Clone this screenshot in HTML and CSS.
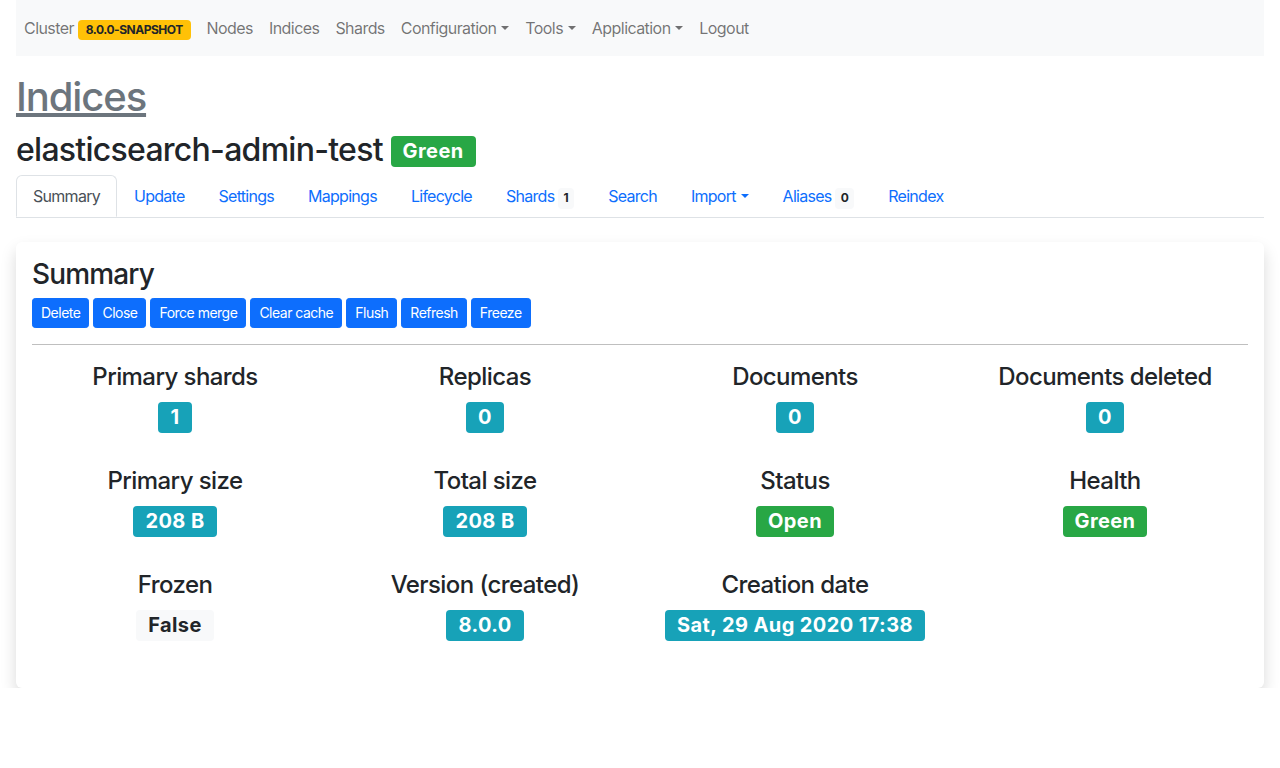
FILE: index.html
```html
<!DOCTYPE html>
<html lang="en">
<head>
<meta charset="utf-8">
<title>Indices - elasticsearch-admin-test</title>
<link rel="stylesheet" href="styles.css">
</head>
<body>
<div class="container">
  <nav class="navbar">
    <ul class="navbar-nav">
      <li><a class="nav-link" href="#">Cluster <span class="badge badge-warning">8.0.0-SNAPSHOT</span></a></li>
      <li><a class="nav-link" href="#">Nodes</a></li>
      <li><a class="nav-link" href="#">Indices</a></li>
      <li><a class="nav-link" href="#">Shards</a></li>
      <li><a class="nav-link dropdown-toggle" href="#">Configuration</a></li>
      <li><a class="nav-link dropdown-toggle" href="#">Tools</a></li>
      <li><a class="nav-link dropdown-toggle" href="#">Application</a></li>
      <li><a class="nav-link" href="#">Logout</a></li>
    </ul>
  </nav>

  <h1 class="page-title"><a href="#">Indices</a></h1>
  <h2 class="index-title">elasticsearch-admin-test <span class="badge badge-lg badge-success">Green</span></h2>

  <ul class="nav-tabs">
    <li><a class="tab-link active" href="#">Summary</a></li>
    <li><a class="tab-link" href="#">Update</a></li>
    <li><a class="tab-link" href="#">Settings</a></li>
    <li><a class="tab-link" href="#">Mappings</a></li>
    <li><a class="tab-link" href="#">Lifecycle</a></li>
    <li><a class="tab-link" href="#">Shards <span class="badge badge-light badge-tab">1</span></a></li>
    <li><a class="tab-link" href="#">Search</a></li>
    <li><a class="tab-link dropdown-toggle" href="#">Import</a></li>
    <li><a class="tab-link" href="#">Aliases <span class="badge badge-light badge-tab">0</span></a></li>
    <li><a class="tab-link" href="#">Reindex</a></li>
  </ul>

  <div class="card">
    <div class="card-body">
      <h3 class="card-title">Summary</h3>
      <div class="actions">
        <button class="btn">Delete</button>
        <button class="btn">Close</button>
        <button class="btn">Force merge</button>
        <button class="btn">Clear cache</button>
        <button class="btn">Flush</button>
        <button class="btn">Refresh</button>
        <button class="btn">Freeze</button>
      </div>
      <hr class="divider">
      <div class="stats">
        <div class="stat"><h4 class="stat-label">Primary shards</h4><span class="badge badge-lg badge-info">1</span></div>
        <div class="stat"><h4 class="stat-label">Replicas</h4><span class="badge badge-lg badge-info">0</span></div>
        <div class="stat"><h4 class="stat-label">Documents</h4><span class="badge badge-lg badge-info">0</span></div>
        <div class="stat"><h4 class="stat-label">Documents deleted</h4><span class="badge badge-lg badge-info">0</span></div>
        <div class="stat"><h4 class="stat-label">Primary size</h4><span class="badge badge-lg badge-info">208 B</span></div>
        <div class="stat"><h4 class="stat-label">Total size</h4><span class="badge badge-lg badge-info">208 B</span></div>
        <div class="stat"><h4 class="stat-label">Status</h4><span class="badge badge-lg badge-success">Open</span></div>
        <div class="stat"><h4 class="stat-label">Health</h4><span class="badge badge-lg badge-success">Green</span></div>
        <div class="stat"><h4 class="stat-label">Frozen</h4><span class="badge badge-lg badge-light">False</span></div>
        <div class="stat"><h4 class="stat-label">Version (created)</h4><span class="badge badge-lg badge-info">8.0.0</span></div>
        <div class="stat"><h4 class="stat-label">Creation date</h4><span class="badge badge-lg badge-info">Sat, 29 Aug 2020 17:38</span></div>
      </div>
    </div>
  </div>
</div>
</body>
</html>
```

FILE: styles.css
```css
* { box-sizing: border-box; }

body {
  margin: 0;
  font-family: Inter, "Noto Sans", sans-serif;
  font-size: 16px;
  line-height: 1.5;
  color: #212529;
  background: #fff;
}

a { text-decoration: none; }

.container {
  padding: 0 16px;
}

/* Navbar */
.navbar {
  background: #f8f9fa;
  height: 56px;
  display: flex;
  align-items: center;
}

.navbar-nav {
  list-style: none;
  margin: 0;
  padding: 0;
  display: flex;
}

.nav-link {
  display: block;
  padding: 8px 8px;
  color: rgba(0, 0, 0, 0.55);
  letter-spacing: -0.035em;
}

.dropdown-toggle::after {
  content: "";
  display: inline-block;
  margin-left: 0.3em;
  vertical-align: 0.255em;
  border-top: 0.3em solid;
  border-right: 0.3em solid transparent;
  border-left: 0.3em solid transparent;
  border-bottom: 0;
}

/* Badges */
.badge {
  display: inline-block;
  padding: 0.35em 0.65em;
  font-size: 12px;
  font-weight: 700;
  line-height: 1;
  letter-spacing: -0.04em;
  text-align: center;
  white-space: nowrap;
  vertical-align: baseline;
  border-radius: 0.25rem;
  color: #fff;
}

.badge-tab {
  padding: 0.35em 0.45em;
  letter-spacing: 0;
}

.badge-lg {
  font-size: 20px;
  padding: 5.5px 12px;
  letter-spacing: 0.02em;
}

.badge-warning { background: #ffc107; color: #212529; }
.badge-success { background: #28a745; }
.badge-info { background: #17a2b8; }
.badge-light { background: #f8f9fa; color: #212529; }

/* Headings */
.page-title {
  margin: 17px 0 10px;
  font-size: 40px;
  font-weight: 500;
  line-height: 1.2;
  letter-spacing: -0.028em;
}

.page-title a {
  color: #6c757d;
  text-decoration: underline;
}

.index-title {
  margin: 0 0 6px;
  font-size: 32px;
  font-weight: 500;
  line-height: 1.2;
  letter-spacing: -0.023em;
}

.index-title .badge {
  vertical-align: 3px;
}

/* Tabs */
.nav-tabs {
  list-style: none;
  margin: 0;
  padding: 0;
  display: flex;
  border-bottom: 1px solid #dee2e6;
}

.nav-tabs li { margin-bottom: -1px; }

.tab-link {
  display: block;
  padding: 8px 16px;
  color: #0d6efd;
  letter-spacing: -0.045em;
  border: 1px solid transparent;
  border-top-left-radius: 0.375rem;
  border-top-right-radius: 0.375rem;
}

.tab-link.active {
  color: #495057;
  background: #fff;
  border-color: #dee2e6 #dee2e6 #fff;
}

/* Card */
.card {
  margin-top: 24px;
  background: #fff;
  border-radius: 0.375rem;
  box-shadow: 0 0.5rem 1rem rgba(0, 0, 0, 0.15);
}

.card-body {
  padding: 16px 16px 13px;
}

.card-title {
  margin: 0 0 7px;
  font-size: 28px;
  font-weight: 500;
  line-height: 1.2;
  letter-spacing: -0.03em;
}

.actions {
  display: flex;
  gap: 4px;
}

.btn {
  font-family: inherit;
  font-size: 14px;
  line-height: 20px;
  letter-spacing: -0.036em;
  padding: 4px 8px;
  color: #fff;
  background: #0d6efd;
  border: 1px solid #0d6efd;
  border-radius: 0.2rem;
}

.divider {
  margin: 16px 0;
  border: 0;
  border-top: 1px solid rgba(0, 0, 0, 0.25);
}

/* Stats grid */
.stats {
  display: grid;
  grid-template-columns: repeat(4, 1fr);
  margin: 0 -12px;
  padding-top: 2px;
}

.stat {
  padding: 0 12px 34px;
  text-align: center;
}

.stat-label {
  margin: 0 0 10px;
  font-size: 24px;
  font-weight: 500;
  line-height: 1.2;
  letter-spacing: -0.024em;
}

.stat .badge {
  vertical-align: top;
}
```
